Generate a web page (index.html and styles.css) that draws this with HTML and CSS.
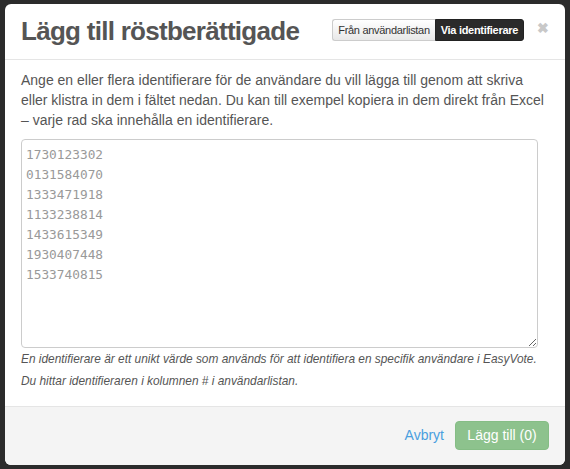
FILE: index.html
```html
<!DOCTYPE html>
<html lang="sv">
<head>
<meta charset="utf-8">
<link rel="stylesheet" href="styles.css">
</head>
<body>
<div class="modal">
  <div class="modal-header">
    <h3 class="title">Lägg till röstberättigade</h3>
    <div class="toggle">
      <span class="tbtn">Från användarlistan</span>
      <span class="tbtn active">Via identifierare</span>
    </div>
    <span class="close">&#x2716;</span>
  </div>
  <div class="modal-body">
    <p class="intro">Ange en eller flera identifierare för de användare du vill lägga till genom att skriva eller klistra in dem i fältet nedan. Du kan till exempel kopiera in dem direkt från Excel – varje rad ska innehålla en identifierare.</p>
    <textarea class="ids">1730123302
0131584070
1333471918
1133238814
1433615349
1930407448
1533740815</textarea>
    <p class="help">En identifierare är ett unikt värde som används för att identifiera en specifik användare i EasyVote.</p>
    <p class="help">Du hittar identifieraren i kolumnen # i användarlistan.</p>
  </div>
  <div class="modal-footer">
    <a class="cancel">Avbryt</a>
    <button class="btn-add" disabled>Lägg till (0)</button>
  </div>
</div>
</body>
</html>
```
FILE: styles.css
```css
html, body {
  margin: 0;
  padding: 0;
  background: #2b2b2b;
  font-family: "Liberation Sans", Arial, sans-serif;
}
body {
  padding: 4px 5px;
}
.modal {
  width: 560px;
  height: 461px;
  background: #fff;
  border-radius: 6px;
  overflow: hidden;
  display: flex;
  flex-direction: column;
}
.modal-header {
  border-bottom: 1px solid #e5e5e5;
  display: flex;
  align-items: center;
  padding: 0 16px;
  box-sizing: border-box;
  height: 56px;
}
.title {
  margin: 0;
  font-size: 26px;
  font-weight: bold;
  color: #555;
  flex: 1;
  letter-spacing: -0.72px;
}
.toggle {
  display: flex;
  height: 22px;
  margin-right: 13px;
  margin-top: -4px;
}
.tbtn {
  font-size: 11px;
  line-height: 20px;
  padding: 0 5px;
  border: 1px solid #ccc;
  color: #333;
  background: linear-gradient(#fff, #e8e8e8);
}
.tbtn:first-child {
  border-radius: 3px 0 0 3px;
  border-right: none;
  letter-spacing: -0.3px;
}
.tbtn.active {
  background: #2a2a2a;
  border-color: #222;
  color: #fff;
  font-weight: bold;
  border-radius: 0 3px 3px 0;
  letter-spacing: -0.3px;
}
.close {
  color: #c8c8c8;
  font-size: 14px;
  font-weight: bold;
  margin-top: -8px;
}
.modal-body {
  flex: 1;
  padding: 10px 16px 0;
}
.intro {
  margin: 0 0 9px;
  font-size: 14px;
  line-height: 20px;
  color: #555;
}
.ids {
  display: block;
  width: 517px;
  height: 209px;
  box-sizing: border-box;
  border: 1px solid #ccc;
  border-radius: 4px;
  padding: 5px 5px 5px 4px;
  font-family: "DejaVu Sans Mono", Consolas, monospace;
  font-size: 12.8px;
  line-height: 20px;
  color: #999;
  resize: vertical;
  margin: 0;
}
.help {
  margin: 0;
  font-size: 11.88px;
  font-style: italic;
  line-height: 22px;
  color: #555;
}
.modal-footer {
  height: 59px;
  box-sizing: border-box;
  border-top: 1px solid #e5e5e5;
  background: #f4f4f4;
  display: flex;
  align-items: center;
  justify-content: flex-end;
  padding: 0 16px 2px;
  gap: 11px;
}
.cancel {
  color: #4a9fdf;
  font-size: 14px;
}
.btn-add {
  font-family: inherit;
  font-size: 14px;
  width: 94px;
  height: 29px;
  border: 1px solid #85bd85;
  border-radius: 4px;
  background: #8dc28d;
  color: #fff;
  padding: 0;
}
```
